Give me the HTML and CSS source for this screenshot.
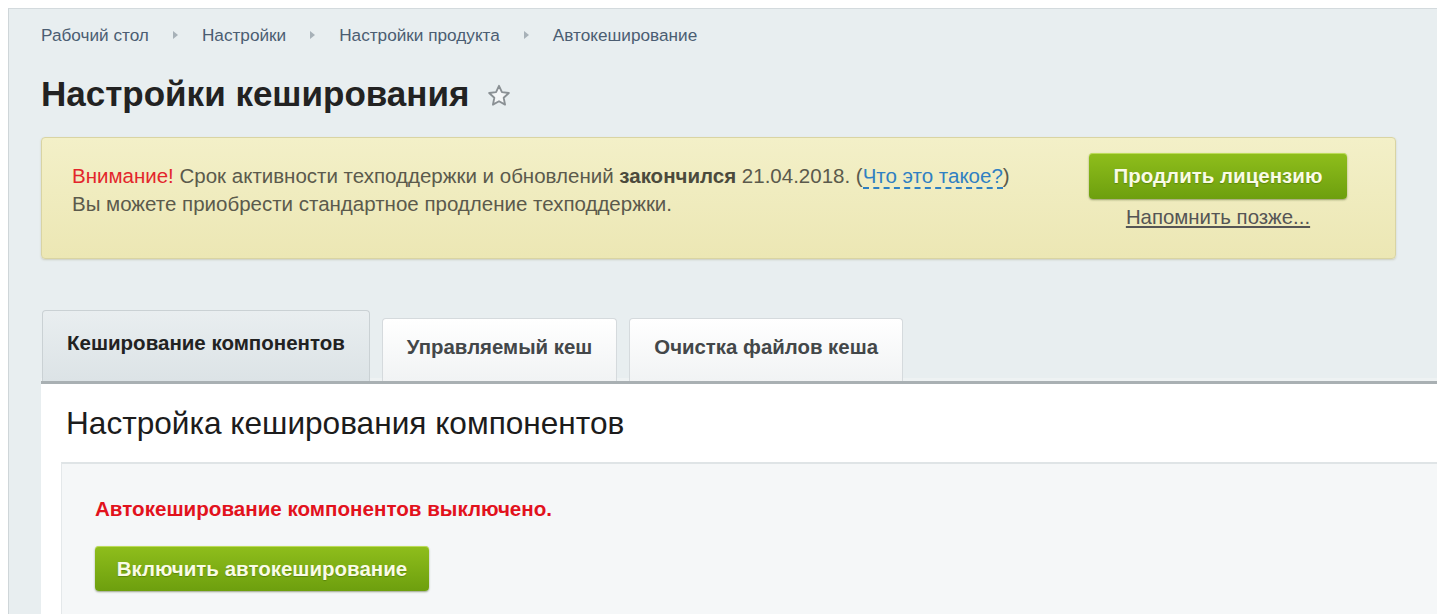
FILE: index.html
```html
<!DOCTYPE html>
<html lang="ru">
<head>
<meta charset="utf-8">
<title>Настройки кеширования</title>
<link rel="stylesheet" href="styles.css">
</head>
<body>
<div class="workarea">
  <nav class="breadcrumbs">
    <a class="crumb" href="#">Рабочий стол</a>
    <span class="crumb-sep"></span>
    <a class="crumb" href="#">Настройки</a>
    <span class="crumb-sep"></span>
    <a class="crumb" href="#">Настройки продукта</a>
    <span class="crumb-sep"></span>
    <a class="crumb" href="#">Автокеширование</a>
  </nav>

  <h1 class="page-title">Настройки кеширования
    <svg class="fav-star" viewBox="0 0 24 24" width="26" height="26" aria-hidden="true">
      <path d="M12 2.6l2.7 5.9 6.4.7-4.8 4.4 1.3 6.4L12 16.8l-5.6 3.2 1.3-6.4-4.8-4.4 6.4-.7z" fill="#f4f6f7" stroke="#8a9094" stroke-width="1.7" stroke-linejoin="round"/>
    </svg>
  </h1>

  <div class="notice">
    <div class="notice-text">
      <p><span class="notice-warn">Внимание!</span> Срок активности техподдержки и обновлений <b>закончился</b> 21.04.2018. (<a class="help-link" href="#">Что это такое?</a>)</p>
      <p>Вы можете приобрести стандартное продление техподдержки.</p>
    </div>
    <div class="notice-actions">
      <a class="btn-green btn-renew" href="#">Продлить лицензию</a>
      <a class="remind-link" href="#">Напомнить позже...</a>
    </div>
  </div>

  <div class="tabs">
    <div class="tab-strip">
      <a class="tab tab-active" href="#">Кеширование компонентов</a>
      <a class="tab" href="#">Управляемый кеш</a>
      <a class="tab" href="#">Очистка файлов кеша</a>
    </div>
    <div class="tab-body">
      <h2 class="section-title">Настройка кеширования компонентов</h2>
      <div class="section-box">
        <p class="status-off">Автокеширование компонентов выключено.</p>
        <a class="btn-green btn-enable" href="#">Включить автокеширование</a>
      </div>
    </div>
  </div>
</div>
</body>
</html>
```

FILE: styles.css
```css
html, body {
  overflow: hidden;
}

body {
  margin: 8px 0 0 8px;
  background: #ffffff;
  font-family: "Liberation Sans", Arial, sans-serif;
  color: #333;
}

a {
  text-decoration: none;
}

.workarea {
  min-height: 620px;
  background: #e8eef0;
  border-top: 1px solid #d3dadd;
  border-left: 1px solid #cfd6d9;
  padding: 0 0 0 32px;
}

/* breadcrumbs */
.breadcrumbs {
  display: flex;
  align-items: center;
  height: 52px;
  font-size: 17.2px;
}

.crumb {
  color: #4b5d72;
}

.crumb-sep {
  width: 0;
  height: 0;
  margin: 0 24px 0 24px;
  border-top: 4px solid transparent;
  border-bottom: 4px solid transparent;
  border-left: 5px solid #a7b1b8;
}

/* page title */
.page-title {
  display: flex;
  align-items: center;
  gap: 17px;
  margin: 3px 0 0;
  height: 60px;
  font-size: 35px;
  font-weight: bold;
  color: #222;
}

.fav-star {
  margin-top: 3px;
}

/* license notice */
.notice {
  display: flex;
  align-items: flex-start;
  justify-content: space-between;
  margin: 13px 41px 0 0;
  height: 122px;
  box-sizing: border-box;
  padding: 15px 48px 0 30px;
  background: linear-gradient(#f3f0c8, #ece7b4);
  border: 1px solid #d9d4a3;
  border-radius: 4px;
  box-shadow: 0 1px 2px rgba(120, 110, 50, 0.25);
}

.notice-text {
  padding-top: 9px;
  font-size: 20.5px;
  line-height: 28px;
  color: #5b5a4c;
}

.notice-text p {
  margin: 0;
}

.notice-text b {
  color: #4b4a3c;
}

.notice-warn {
  color: #e3262c;
}

.help-link {
  color: #2f80c2;
  border-bottom: 2px dashed #2f80c2;
}

.notice-actions {
  display: flex;
  flex-direction: column;
  align-items: center;
  gap: 7px;
}

.btn-green {
  display: flex;
  align-items: center;
  justify-content: center;
  box-sizing: border-box;
  background: linear-gradient(#8fbe1c, #6d9f0e);
  border-radius: 4px;
  box-shadow: 0 1px 2px rgba(40, 60, 0, 0.45), inset 0 1px 0 rgba(220, 240, 130, 0.6);
  color: #f9fbe6;
  font-weight: bold;
  font-size: 20.5px;
  text-shadow: 0 1px 1px rgba(50, 80, 0, 0.4);
}

.btn-renew {
  width: 258px;
  height: 46px;
}

.remind-link {
  color: #555;
  font-size: 20.4px;
  text-decoration: underline;
}

/* tabs */
.tabs {
  margin-top: 51px;
}

.tab-strip {
  display: flex;
  align-items: flex-end;
  gap: 12px;
  padding-left: 1px;
  border-bottom: 3px solid #a9b0b3;
  box-shadow: inset 0 -3px 0 #eef2f3;
}

.tab {
  display: flex;
  align-items: center;
  justify-content: center;
  box-sizing: border-box;
  height: 63px;
  padding: 0 24px 6px;
  background: linear-gradient(#ffffff, #f1f3f4);
  border: 1px solid #d5dadd;
  border-bottom: none;
  border-radius: 4px 4px 0 0;
  font-size: 20.4px;
  font-weight: bold;
  color: #434749;
}

.tab-active {
  height: 71px;
  font-size: 20.5px;
  background: linear-gradient(#e9eef0, #dce3e6);
  border-color: #cad1d4;
  color: #222;
}

.tab-body {
  background: #ffffff;
  padding: 21px 0 0 20px;
  height: 260px;
}

.section-title {
  margin: 0 0 0 5px;
  height: 57px;
  font-size: 31.6px;
  line-height: 36px;
  font-weight: normal;
  color: #1c1c1c;
}

.section-box {
  padding: 33px 0 0 33px;
  height: 200px;
  background: #f5f7f8;
  border-top: 2px solid #dfe4e6;
  border-left: 1px solid #e4e8ea;
}

.status-off {
  margin: 0 0 25px;
  font-size: 20.6px;
  font-weight: bold;
  color: #e2121d;
}

.btn-enable {
  width: 334px;
  height: 45px;
}
```
